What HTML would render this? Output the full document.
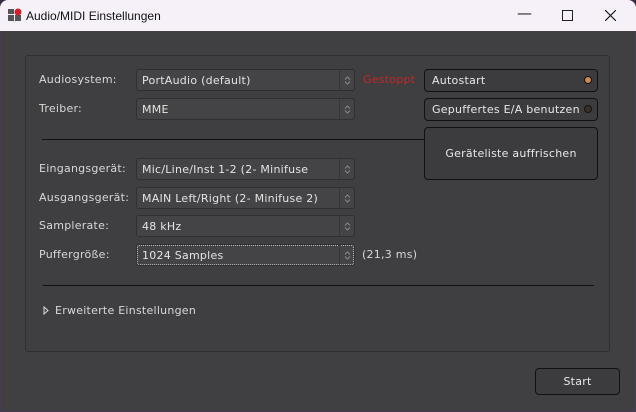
<!DOCTYPE html>
<html><head><meta charset="utf-8"><style>
*{box-sizing:border-box;margin:0;padding:0}
html,body{width:636px;height:412px;overflow:hidden;background:#3a2a44}
.win{position:absolute;left:0;top:0;width:636px;height:412px;background:#404042;border-radius:8px 8px 0 0;overflow:hidden;box-shadow:inset 0 0 0 1px #4a3a56}
.title{position:absolute;left:0;top:0;width:636px;height:31px;background:#f6f1f8;font:12px "Liberation Sans",sans-serif;color:#111}
.title .t{position:absolute;left:26px;top:9px}
.wb{position:absolute;top:6px;font:15px "DejaVu Sans",sans-serif;color:#222}
.panel{position:absolute;left:25px;top:55px;width:585px;height:297px;border:1px solid #2f2f31;border-radius:3px;background:#3f3f41}
.lbl{position:absolute;font:11px "DejaVu Sans",sans-serif;color:#d8d8d8;letter-spacing:0.25px}
.cb{position:absolute;left:136px;width:219px;height:22px;background:#444446;border:1px solid #303032;border-radius:3px;font:11px "DejaVu Sans",sans-serif;color:#e4e4e4;padding:4px 0 0 5px;letter-spacing:0.25px}
.cb::after{content:"";position:absolute;right:14px;top:0;width:1px;height:20px;background:#353537}
.cb svg{position:absolute;right:3px;top:6px}
.btn{position:absolute;left:424px;width:174px;background:#3c3c3e;border:1px solid #111;border-radius:4px;font:11px "DejaVu Sans",sans-serif;color:#e8e8e8;letter-spacing:0.25px}
.led{position:absolute;right:5px;top:6px;width:8px;height:8px;border-radius:50%;border:1px solid #111}
.line{position:absolute;height:1px;background:#111}
</style></head><body><div class="win">
<div class="title">
<svg style="position:absolute;left:8px;top:8px" width="14" height="14"><rect x="0" y="1" width="6" height="5" fill="#555"/><rect x="0" y="7" width="6" height="6" fill="#555"/><rect x="7" y="7" width="6" height="6" fill="#555"/><circle cx="10" cy="4" r="3.5" fill="#d0202a"/></svg>
<span class="t">Audio/MIDI Einstellungen</span>
<span class="wb" style="left:517px;top:4px">—</span>
<span style="position:absolute;left:562px;top:10px;width:11px;height:11px;border:1px solid #222"></span>
<svg style="position:absolute;left:605px;top:10px" width="11" height="11"><path d="M0 0L11 11M11 0L0 11" stroke="#222" stroke-width="1.2"/></svg>
</div>
<div class="panel"></div>
<div class="lbl" style="left:39px;top:73px">Audiosystem:</div>
<div class="lbl" style="left:39px;top:102px">Treiber:</div>
<div class="lbl" style="left:39px;top:162px">Eingangsgerät:</div>
<div class="lbl" style="left:39px;top:191px">Ausgangsgerät:</div>
<div class="lbl" style="left:39px;top:219px">Samplerate:</div>
<div class="lbl" style="left:39px;top:248px">Puffergröße:</div>
<div class="cb" style="top:69px">PortAudio (default)<svg width="7" height="9"><path d="M1 3.5L3.5 1L6 3.5M1 5.5L3.5 8L6 5.5" fill="none" stroke="#888"/></svg></div>
<div class="cb" style="top:98px">MME<svg width="7" height="9"><path d="M1 3.5L3.5 1L6 3.5M1 5.5L3.5 8L6 5.5" fill="none" stroke="#888"/></svg></div>
<div class="cb" style="top:158px">Mic/Line/Inst 1-2 (2- Minifuse<svg width="7" height="9"><path d="M1 3.5L3.5 1L6 3.5M1 5.5L3.5 8L6 5.5" fill="none" stroke="#888"/></svg></div>
<div class="cb" style="top:187px">MAIN Left/Right (2- Minifuse 2)<svg width="7" height="9"><path d="M1 3.5L3.5 1L6 3.5M1 5.5L3.5 8L6 5.5" fill="none" stroke="#888"/></svg></div>
<div class="cb" style="top:215px">48 kHz<svg width="7" height="9"><path d="M1 3.5L3.5 1L6 3.5M1 5.5L3.5 8L6 5.5" fill="none" stroke="#888"/></svg></div>
<div class="cb" style="top:244px;outline:1px dotted #bbb;outline-offset:-2px">1024 Samples<svg width="7" height="9"><path d="M1 3.5L3.5 1L6 3.5M1 5.5L3.5 8L6 5.5" fill="none" stroke="#888"/></svg></div>
<div class="lbl" style="left:362px;top:248px">(21,3 ms)</div>
<div class="lbl" style="left:363px;top:73px;color:#c02828">Gestoppt</div>
<div class="btn" style="top:69px;height:23px;padding:4px 0 0 7px">Autostart<span class="led" style="background:#d08a50"></span></div>
<div class="btn" style="top:98px;height:23px;padding:4px 0 0 7px">Gepuffertes E/A benutzen<span class="led" style="background:#3a3026"></span></div>
<div class="btn" style="top:127px;height:53px;text-align:center;padding-top:19px">Geräteliste auffrischen</div>
<div class="line" style="left:42px;top:139px;width:382px"></div>
<div class="line" style="left:43px;top:285px;width:551px"></div>
<svg style="position:absolute;left:43px;top:306px" width="6" height="9"><path d="M1 1L5 4.5L1 8Z" fill="none" stroke="#ddd"/></svg>
<div class="lbl" style="left:55px;top:304px">Erweiterte Einstellungen</div>
<div class="btn" style="left:535px;width:85px;top:368px;height:27px;text-align:center;padding-top:6px">Start</div>
</div></body></html>
